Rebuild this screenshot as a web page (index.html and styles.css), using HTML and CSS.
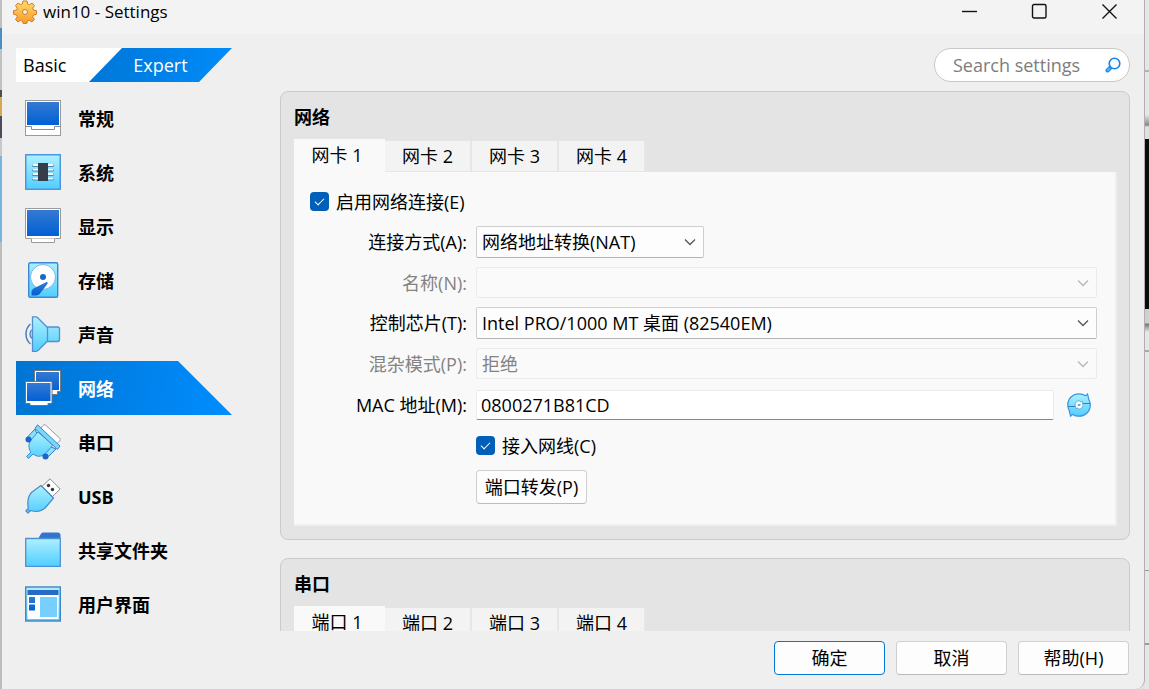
FILE: index.html
```html
<!DOCTYPE html>
<html lang="zh-CN">
<head>
    <meta charset="UTF-8">
    <meta name="viewport" content="width=device-width, initial-scale=1.0">
    <title>win10 - Settings</title>
    <link rel="stylesheet" href="styles.css">
</head>
<body>
    <svg width="0" height="0" class="defs" aria-hidden="true">
        <defs>
            <linearGradient id="screen" x1="0" y1="0" x2="0" y2="1">
                <stop offset="0" stop-color="#347ad2"/>
                <stop offset="1" stop-color="#0060d5"/>
            </linearGradient>
            <linearGradient id="cyan" x1="0" y1="0" x2="0" y2="1">
                <stop offset="0" stop-color="#aef0fe"/>
                <stop offset="1" stop-color="#50ceff"/>
            </linearGradient>
            <linearGradient id="gold" x1="0" y1="0" x2="0" y2="1">
                <stop offset="0" stop-color="#ffdc68"/>
                <stop offset="1" stop-color="#f99a26"/>
            </linearGradient>
        </defs>
    </svg>

    <div class="edge edge-left"></div>

    <div class="window">
        <header class="titlebar">
            <svg class="app-icon" width="24" height="24" viewBox="0 0 24 24">
                <path d="M10 1h4l.7 3 1.8.8L19 3l2.500 2.500-1.800 2.700.8 1.800 3 .7v3.500l-3 .8-.8 1.800 1.700 2.700L18.900 22l-2.700-1.800-1.700.8-.8 2.500h-3.500l-.8-2.500-1.800-.8L5 22l-2.500-2.500 1.800-2.700-.8-1.800-3-.8v-3.500l3-.7.8-1.800L2.500 5.500 5 3l2.600 1.800L9.300 4z" fill="url(#gold)" stroke="#d07a2c" stroke-linejoin="round"/>
                <circle cx="12" cy="12" r="2.500" fill="#f7eee4" stroke="#c87c38"/>
            </svg>
            <h1 class="window-title">win10 - Settings</h1>
            <div class="window-buttons">
                <button class="window-btn" aria-label="Minimize"><svg width="17" height="17" viewBox="0 0 17 17"><path d="M1 8.500h15"/></svg></button>
                <button class="window-btn" aria-label="Maximize"><svg width="17" height="17" viewBox="0 0 17 17"><rect x="1.500" y="1.500" width="13.500" height="13.500" rx="1.500"/></svg></button>
                <button class="window-btn" aria-label="Close"><svg width="17" height="17" viewBox="0 0 17 17"><path d="M1.500 1.500l14 14M15.500 1.500l-14 14"/></svg></button>
            </div>
        </header>

        <div class="toolbar">
            <div class="mode-switch">
                <button class="mode mode-basic">Basic</button>
                <button class="mode mode-expert">Expert</button>
            </div>
            <div class="search">
                <input type="text" class="search-input" placeholder="Search settings" aria-label="Search settings">
                <svg width="16" height="16" viewBox="0 0 16 16">
                    <path d="M5.500 10.500L2.500 13.500" stroke="#1f86e8" stroke-width="4" stroke-linecap="round"/>
                    <path d="M4.500 11.500L2.700 13.300" stroke="#4cb8f8" stroke-width="2" stroke-linecap="round"/>
                    <circle cx="9.500" cy="6.500" r="5.300" fill="#f4fbff" stroke="#1f80e0" stroke-width="1.600"/>
                </svg>
            </div>
        </div>

        <div class="main">
            <nav class="sidebar">
                <a href="#general" class="nav-item">
                    <svg width="36" height="36" viewBox="0 0 36 36">
                        <rect x=".5" y=".5" width="35" height="35" fill="#fff" stroke="#9a9a9a"/>
                        <rect x="2" y="2" width="32" height="23" fill="url(#screen)"/>
                        <path d="M.5 26.500h6v3h23v-3h6" fill="none" stroke="#8e8e8e"/>
                    </svg>
                    <span>常规</span>
                </a>
                <a href="#system" class="nav-item">
                    <svg width="36" height="36" viewBox="0 0 36 36">
                        <rect x=".75" y=".75" width="34.500" height="34.500" fill="url(#cyan)" stroke="#4c95df" stroke-width="1.500"/>
                        <path d="M8.500 11.500h19M8.500 16h19M8.500 20.500h19M8.500 25h19" stroke="#438abf" stroke-width="3" stroke-linecap="round"/>
                        <path d="M8.500 11h19M8.500 15.500h19M8.500 20h19M8.500 24.500h19" stroke="#f3fcff" stroke-width="2" stroke-linecap="round"/>
                        <rect x="13" y="9" width="10" height="18" fill="#343e4b"/>
                    </svg>
                    <span>系统</span>
                </a>
                <a href="#display" class="nav-item">
                    <svg width="36" height="36" viewBox="0 0 36 36">
                        <path d="M.5.500h35v30h-6v4h-23v-4h-6z" fill="#fff" stroke="#9a9a9a"/>
                        <path d="M6.500 30.500h23" stroke="#ccc"/>
                        <rect x="2" y="2" width="32" height="26" fill="url(#screen)"/>
                    </svg>
                    <span>显示</span>
                </a>
                <a href="#storage" class="nav-item">
                    <svg width="36" height="36" viewBox="0 0 36 36">
                        <rect x="3.700" y=".7" width="29" height="34.500" rx="1.500" fill="url(#cyan)" stroke="#3f86d2" stroke-width="1.400"/>
                        <circle cx="18" cy="15" r="12.500" fill="#fff" stroke="#73b7ea"/>
                        <circle cx="18" cy="15" r="3" fill="#1769cc"/>
                        <path d="M20.500 20.500c2-1 3 0 1.500 2L15 31.500c-1 1.500-3 2-5 2H6.500v-4c0-1 1-2 2-3z" fill="url(#screen)"/>
                    </svg>
                    <span>存储</span>
                </a>
                <a href="#audio" class="nav-item">
                    <svg width="36" height="36" viewBox="0 0 36 36">
                        <path d="M5.500 8c-6 5-6 15 0 20" fill="none" stroke="#477fbd" stroke-width="1.500"/>
                        <path d="M8 13.500c-4 1-4 8 0 9" fill="#91e1fc" stroke="#477fbd" stroke-width="1.200"/>
                        <path d="M7.500.8H11c1 0 1.500.7 2.500 1.700L22 11h10.500c1.500 0 2 .5 2 2v10.500c0 1.500-.5 2-2 2H22L13.500 34c-1 1-1.500 1.300-2.500 1.300H7.500z" fill="url(#cyan)" stroke="#568fce" stroke-width="1.300"/>
                        <path d="M22.500 11v14.500" stroke="#568fce" stroke-width="1.300"/>
                    </svg>
                    <span>声音</span>
                </a>
                <a href="#network" class="nav-item active">
                    <svg width="36" height="36" viewBox="0 0 36 36">
                        <path d="M9.500.5h26v21h-3v3h-21v-3h-2z" fill="#fff" stroke="#777"/>
                        <rect x="11" y="2" width="23" height="18" fill="url(#screen)"/>
                        <path d="M.5 11.500h26.500v22h-4v2H5v-2H.5z" fill="#fff" stroke="#6d737b"/>
                        <rect x="2" y="13" width="23.500" height="18" fill="url(#screen)"/>
                    </svg>
                    <span>网络</span>
                </a>
                <a href="#serial" class="nav-item">
                    <svg width="36" height="36" viewBox="0 0 36 36">
                        <path d="M15 5l3-3.500c1-1 2-1 3 0L34.500 14c1 1 1 2 0 3L31.500 20z" fill="#fff" stroke="#999"/>
                        <path d="M10 5L2.500 13v4H6l6-7zM31 25l-7.500 7.500h-4.500v-4l6-6z" fill="#8ae1fc" stroke="#3979c2"/>
                        <path d="M13 8L5 17c-2 5-1 9 1 11l-4.500 4.500 2 2L8 30c4 3 8 3 12 0l8-9z" fill="url(#cyan)" stroke="#448cd3"/>
                        <path d="M12.500.8L35 22l-2.500 3.500L10 4.500z" fill="#78d8fb" stroke="#3d82cc" stroke-linejoin="round"/>
                        <circle cx="3.500" cy="15.500" r="3" fill="#1868cc"/>
                        <circle cx="20.500" cy="32.500" r="3" fill="#1868cc"/>
                    </svg>
                    <span>串口</span>
                </a>
                <a href="#usb" class="nav-item">
                    <svg width="36" height="36" viewBox="0 0 36 36">
                        <path d="M17 8.500L25 .8 35.200 11 27.500 18.500z" fill="#fff" stroke="#8c8c8c"/>
                        <path d="M16 7.500L28.500 20l-8 9.500c-4 4-9 5-15 3L3 35 .8 32.800l2.500-2.500C2 23 4 17 7 14z" fill="url(#cyan)" stroke="#488ccc" stroke-width="1.200" stroke-linejoin="round"/>
                        <path d="M2.500 31L5 33.500" stroke="#488ccc"/>
                        <circle cx="23.500" cy="7.500" r="1.700" fill="#333"/>
                        <circle cx="27.500" cy="11.500" r="1.700" fill="#333"/>
                    </svg>
                    <span>USB</span>
                </a>
                <a href="#shared" class="nav-item">
                    <svg width="36" height="36" viewBox="0 0 36 36">
                        <path d="M13.500 7l2.500-4.500c.5-1 1-1.500 2-1.500h15c1.500 0 2 .5 2 2v6H13.500z" fill="#2f74d0" stroke="#3b79c6"/>
                        <path d="M.7 6.500h34.600v27.800H.7z" fill="url(#cyan)" stroke="#4b91d5" stroke-width="1.300"/>
                    </svg>
                    <span>共享文件夹</span>
                </a>
                <a href="#ui" class="nav-item">
                    <svg width="36" height="36" viewBox="0 0 36 36">
                        <rect x=".7" y="1" width="34.600" height="34" fill="url(#cyan)" stroke="#4086c4" stroke-width="1.400"/>
                        <rect x="2.500" y="4" width="31" height="5" fill="#286bc6"/>
                        <rect x="2.500" y="9" width="31" height="24" fill="#fff"/>
                        <path d="M4 11h6v6H4zM4 18.500h6v6H4z" fill="url(#screen)"/>
                        <rect x="15" y="11" width="17" height="20" fill="#77cffd"/>
                    </svg>
                    <span>用户界面</span>
                </a>
            </nav>

            <main class="content">
                <section class="card" id="network">
                    <h2 class="card-title">网络</h2>
                    <div class="tabs">
                        <button class="tab active">网卡 1</button>
                        <button class="tab">网卡 2</button>
                        <button class="tab">网卡 3</button>
                        <button class="tab">网卡 4</button>
                    </div>
                    <form class="panel">
                        <div class="check-row wide">
                            <input type="checkbox" class="check" id="enable" checked>
                            <label for="enable">启用网络连接(E)</label>
                        </div>

                        <label class="field-label" for="attached">连接方式(A):</label>
                        <div class="select-box select-short">
                            <select id="attached"><option>网络地址转换(NAT)</option></select>
                            <svg width="12" height="8" viewBox="0 0 12 8"><path d="M1 1.500l5 5 5-5"/></svg>
                        </div>

                        <label class="field-label disabled" for="name">名称(N):</label>
                        <div class="select-box disabled">
                            <select id="name" disabled><option></option></select>
                            <svg width="12" height="8" viewBox="0 0 12 8"><path d="M1 1.500l5 5 5-5"/></svg>
                        </div>

                        <label class="field-label" for="adapter">控制芯片(T):</label>
                        <div class="select-box">
                            <select id="adapter"><option>Intel PRO/1000 MT 桌面 (82540EM)</option></select>
                            <svg width="12" height="8" viewBox="0 0 12 8"><path d="M1 1.500l5 5 5-5"/></svg>
                        </div>

                        <label class="field-label disabled" for="promiscuous">混杂模式(P):</label>
                        <div class="select-box disabled">
                            <select id="promiscuous" disabled><option>拒绝</option></select>
                            <svg width="12" height="8" viewBox="0 0 12 8"><path d="M1 1.500l5 5 5-5"/></svg>
                        </div>

                        <label class="field-label" for="mac">MAC 地址(M):</label>
                        <div class="mac-row">
                            <input type="text" class="text-input" id="mac" value="0800271B81CD">
                            <button type="button" class="refresh-btn" aria-label="Refresh">
                                <svg width="24" height="24" viewBox="0 0 24 24">
                                    <path d="M12 .8c2.500 0 4.800.8 6.600 2L20.500.8l1.300 5.700c1 1.700 1.500 3.500 1.500 5.500 0 6.300-5 11.200-11.300 11.200-2.300 0-4.500-.6-6.300-1.800l-2.200 1.800-1.200-5.400C1.300 16 .8 14 .8 12 .8 5.700 5.700.8 12 .8z" fill="url(#cyan)" stroke="#3a92e0" stroke-width="1.200" stroke-linejoin="round"/>
                                    <path d="M1 13.500h7.500M15.500 10.500H23" stroke="#2f7fd0" stroke-width="1.200"/>
                                    <path d="M8 12c0-2.500 2-4.300 4.500-4.300L13.500 9l1.800-.5.7 3.500c0 2.500-2 4-4.300 4.200L10.800 15l-1.900.500z" fill="#fff" stroke="#5b9cc8" stroke-width=".8"/>
                                    <path d="M10.800 12.300l2.700-.8" stroke="#48a6e4" stroke-width="1.800"/>
                                </svg>
                            </button>
                        </div>

                        <div class="check-row second">
                            <input type="checkbox" class="check" id="cable" checked>
                            <label for="cable">接入网线(C)</label>
                        </div>
                        <button type="button" class="btn second">端口转发(P)</button>
                    </form>
                </section>

                <section class="card" id="serial">
                    <h2 class="card-title">串口</h2>
                    <div class="tabs">
                        <button class="tab active">端口 1</button>
                        <button class="tab">端口 2</button>
                        <button class="tab">端口 3</button>
                        <button class="tab">端口 4</button>
                    </div>
                    <div class="panel"></div>
                </section>
            </main>
        </div>

        <footer class="footer">
            <button class="btn btn-default">确定</button>
            <button class="btn">取消</button>
            <button class="btn">帮助(H)</button>
        </footer>
    </div>

    <div class="edge edge-right"></div>
</body>
</html>
```
FILE: styles.css
```css
* {
    box-sizing: border-box;
}

body {
    margin: 0;
    height: 100vh;
    display: flex;
    overflow: hidden;
    background: #e4e4e4;
    color: #000;
    font-family: "Open Sans", "Noto Sans CJK SC", sans-serif;
    font-size: 18px;
    line-height: 24px;
}

button,
input,
select {
    font: inherit;
    color: inherit;
}

.defs {
    position: absolute;
}

/* desktop showing on both sides of the window */
.edge-left {
    width: 2px;
    background: linear-gradient(#c0c0c0 28px, #4a8fc0 28px, #4a8fc0 49px, #c0c0c0 49px, #c0c0c0 90px, #4b4e5a 90px, #4b4e5a 97px, #d8a850 97px, #d8a850 116px, #4b4e5a 116px, #4b4e5a 138px, #c8c8c8 138px, #c8c8c8 156px, #79b4dc 156px, #79b4dc 242px, #bdbdbd 242px);
}

.edge-right {
    width: 4px;
    background: linear-gradient(#e6e6e6 70px, #b4b4b4 70px, #b4b4b4 72px, #e6e6e6 72px, #e6e6e6 115px, #888 125px, #e0e0e0 127px, #e0e0e0 139px, #0c0c0c 139px, #0c0c0c 309px, #d0d0d0 309px, #d0d0d0 323px, #777 324px, #e6e6e6 332px, #e6e6e6 350px, #aaa 350px, #aaa 352px, #e6e6e6 352px, #e6e6e6 570px, #999 570px, #999 571px, #e6e6e6 571px, #e6e6e6 643px, #999 643px, #999 645px, #e6e6e6 645px);
}

.window {
    flex: 1;
    min-width: 0;
    display: flex;
    flex-direction: column;
    background: #efefef;
    border-right: 1px solid #b0b0b0;
    border-bottom-right-radius: 9px;
}

.titlebar {
    display: flex;
    align-items: center;
    height: 34px;
    padding: 0 0 11px 11px;
    background: #f3f3f3;
}

.window-title {
    flex: 1;
    margin: 0 0 0 6px;
    font-size: 17px;
    font-weight: normal;
}

.window-buttons {
    display: flex;
}

.window-btn {
    width: 70px;
    height: 23px;
    padding: 0;
    border: none;
    background: none;
    display: flex;
    align-items: center;
    justify-content: center;
}

.window-btn svg {
    fill: none;
    stroke: #111;
    stroke-width: 1.4;
}

.toolbar {
    display: flex;
    justify-content: space-between;
    padding: 14px 14px 9px 14px;
}

.mode-switch {
    display: flex;
}

.mode {
    height: 34px;
    padding: 0;
    border: none;
}

.mode-basic {
    width: 106px;
    padding-left: 7px;
    text-align: left;
    background: #fff;
    clip-path: polygon(0 0, 100% 0, 73px 100%, 0 100%);
}

.mode-expert {
    width: 143px;
    margin-left: -33px;
    color: #fff;
    background: linear-gradient(100deg, #0076d6, #008cfb);
    clip-path: polygon(33px 0, 100% 0, 110px 100%, 0 100%);
}

.search {
    display: flex;
    align-items: center;
    width: 196px;
    height: 34px;
    padding: 0 8px 0 18px;
    border: 1px solid #c8c8c8;
    border-radius: 17px;
    background: #fff;
}

.search svg {
    flex: none;
    fill: none;
}

.search-input {
    flex: 1;
    min-width: 0;
    padding: 0;
    border: none;
    outline: none;
    background: none;
}

.search-input::placeholder {
    color: #7d7d7d;
}

.main {
    flex: 1;
    min-height: 0;
    display: flex;
    padding: 0 14px;
}

.sidebar {
    width: 216px;
    flex: none;
}

.nav-item {
    display: flex;
    align-items: center;
    gap: 17px;
    height: 54px;
    padding-left: 9px;
    color: #000;
    font-weight: bold;
    text-decoration: none;
}

.nav-item svg {
    flex: none;
}

.nav-item span {
    padding-top: 2px;
}

.nav-item.active {
    color: #fff;
    background: linear-gradient(100deg, #0074d2, #008dff);
    clip-path: polygon(0 0, 162px 0, 100% 100%, 0 100%);
}

.content {
    flex: 1;
    min-width: 0;
    margin-left: 48px;
    overflow: hidden;
}

.card {
    margin-bottom: 18px;
    padding: 13px 12px 13px 13px;
    border: 1px solid #cbcbcb;
    border-radius: 8px;
    background: #e4e4e4;
}

.card-title {
    margin: 0 0 10px;
    font-size: 18px;
    font-weight: bold;
}

.tabs {
    display: flex;
    align-items: flex-end;
    height: 33px;
}

.tab {
    width: 87px;
    height: 31px;
    padding: 0;
    border: none;
    border-right: 2px solid #e6e6e6;
    border-bottom: 1px solid #e6e6e6;
    background: #f3f3f3;
}

.tab.active {
    width: 91px;
    height: 33px;
    border: none;
    padding: 0 5px 2px 0;
    background: #f9f9f9;
}

.panel {
    display: grid;
    grid-template-columns: 157px 1fr;
    gap: 9px;
    align-items: center;
    padding: 15px 18px 20px 16px;
    border-right: 2px solid #efefef;
    border-bottom: 2px solid #efefef;
    background: #f9f9f9;
}

.wide {
    grid-column: 1 / -1;
}

.second {
    grid-column: 2;
    justify-self: start;
}

.field-label {
    text-align: right;
    white-space: nowrap;
}

.field-label.disabled {
    color: #838383;
}

.check-row {
    display: flex;
    align-items: center;
    gap: 7px;
    height: 30px;
    padding-bottom: 1px;
}

.check {
    appearance: none;
    display: grid;
    place-items: center;
    width: 19px;
    height: 19px;
    margin: 0;
    border-radius: 4px;
    background: #005fb8;
}

.check:checked::before {
    content: "";
    width: 8px;
    height: 4px;
    margin-bottom: 2px;
    border-left: 1px solid #fff;
    border-bottom: 1px solid #fff;
    transform: rotate(-45deg);
}

.select-box {
    position: relative;
}

.select-box select {
    appearance: none;
    display: block;
    width: 100%;
    height: 32px;
    padding: 0 30px 0 5px;
    border: 1px solid #cfcfcf;
    border-bottom-color: #b4b4b4;
    border-radius: 2px;
    background: #fdfdfd;
}

.select-box svg {
    position: absolute;
    right: 8px;
    top: 12px;
    fill: none;
    stroke: #555;
    stroke-width: 1.3;
    pointer-events: none;
}

.select-box.disabled select {
    height: 31px;
    border-color: #ebebeb;
    background: #fafafa;
    color: #838383;
    opacity: 1;
}

.select-box.disabled svg {
    stroke: #b8b8b8;
}

.select-short {
    width: 228px;
}

.mac-row {
    display: flex;
    align-items: center;
    gap: 13px;
    height: 34px;
    padding-right: 6px;
}

.text-input {
    flex: 1;
    min-width: 0;
    height: 30px;
    padding: 0 4px;
    border: 1px solid #ebebeb;
    border-bottom-color: #868686;
    border-radius: 2px;
    background: #fff;
}

.refresh-btn {
    display: flex;
    padding: 0;
    border: none;
    background: none;
}

.btn {
    width: 111px;
    height: 34px;
    padding: 0;
    border: 1px solid #d0d0d0;
    border-bottom-color: #bcbcbc;
    border-radius: 4px;
    background: #fdfdfd;
}

.btn-default {
    border-color: #0078d4;
}

.footer {
    display: flex;
    justify-content: flex-end;
    gap: 11px;
    padding: 10px 15px 14px;
}
```
